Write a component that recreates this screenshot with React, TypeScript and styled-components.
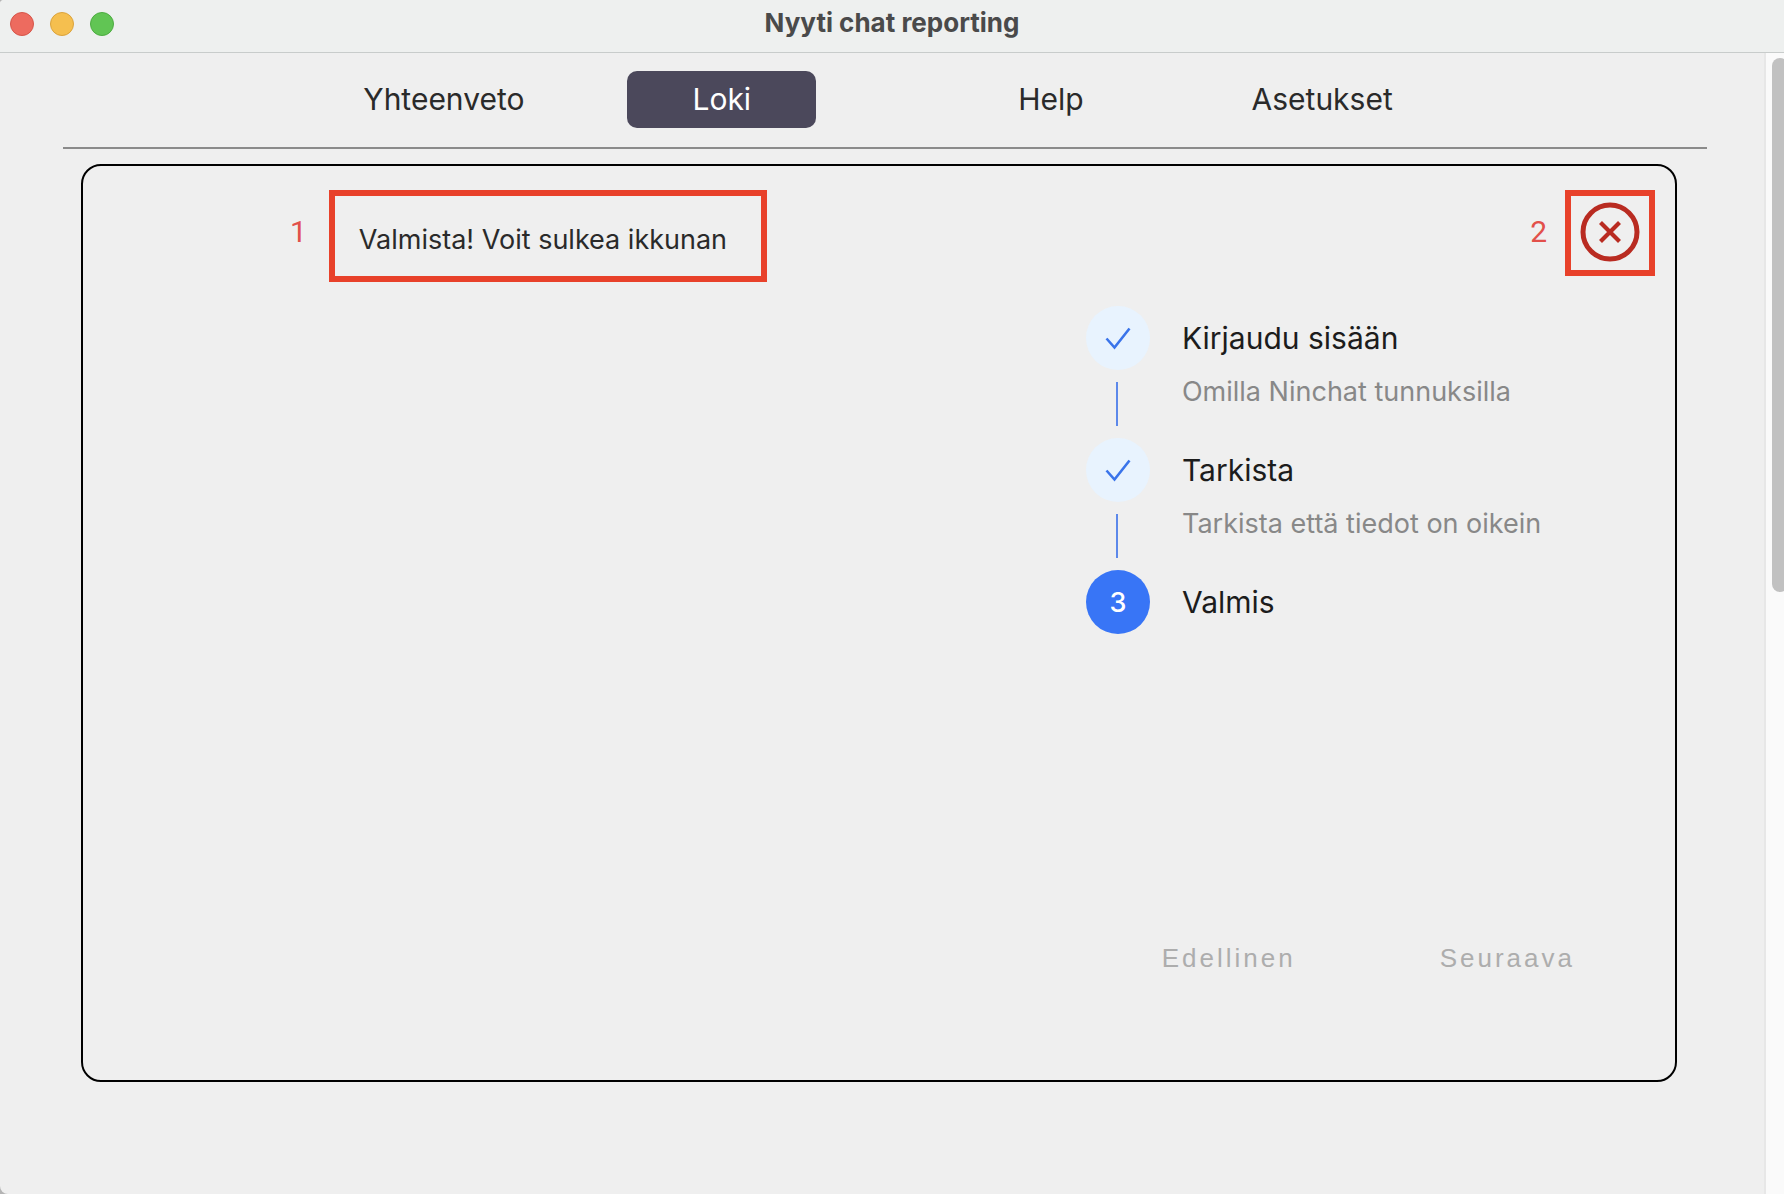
import React from "react";
import styled, { createGlobalStyle } from "styled-components";

const GlobalStyle = createGlobalStyle`
  *, *::before, *::after { box-sizing: border-box; }
  body {
    margin: 0;
    background: #b4b4b4;
    font-family: Inter, "Liberation Sans", sans-serif;
  }
  button { border: 0; padding: 0; background: none; font: inherit; cursor: pointer; }
`;

const Window = styled.div`
  display: flex;
  flex-direction: column;
  min-height: 100vh;
  overflow: hidden;
  background: #efefef;
  border-radius: 4px 0 0 8px;
`;

const TitleBar = styled.header`
  display: grid;
  grid-template-columns: 1fr auto 1fr;
  align-items: center;
  height: 53px;
  padding: 0 10px 5px;
  background: #eef0ef;
  border-bottom: 1px solid #c8cccb;
`;

const Lights = styled.div`
  display: flex;
  gap: 16px;
`;

const Light = styled.button<{ $fill: string; $edge: string }>`
  width: 24px;
  height: 24px;
  border: 1px solid ${(p) => p.$edge};
  border-radius: 50%;
  background: ${(p) => p.$fill};
`;

const Title = styled.h1`
  margin: 0;
  padding-bottom: 2px;
  font-size: 26px;
  line-height: 32px;
  font-weight: 700;
  color: #4a4a4a;
`;

const Viewport = styled.div`
  flex: 1;
  display: flex;
`;

const Content = styled.main`
  flex: 1;
  min-width: 0;
  padding: 0 57px 48px 63px;
`;

const ScrollTrack = styled.div`
  width: 20px;
  padding: 5px 0 0 6px;
  background: #fafafa;
  border-left: 2px solid #e7e7e7;
`;

const ScrollThumb = styled.div`
  width: 16px;
  height: 534px;
  border-radius: 8px;
  background: #c1c1c1;
`;

const Nav = styled.nav`
  display: flex;
  justify-content: center;
  gap: 137px;
  padding: 18px 14px 19px 0;
  border-bottom: 2px solid #8b8b8b;
`;

const NavGroup = styled.div`
  display: flex;
  gap: 38px;
`;

const NavItem = styled.button<{ $active?: boolean }>`
  padding: 0 65px;
  border-radius: 10px;
  font-size: 30px;
  line-height: 57px;
  color: ${(p) => (p.$active ? "#ffffff" : "#2a2a2a")};
  background: ${(p) => (p.$active ? "#4b485b" : "transparent")};
`;

const Card = styled.section`
  margin: 15px 30px 0 18px;
  padding: 24px 0 106px;
  border: 2px solid #000;
  border-radius: 20px;
`;

const CardHeader = styled.div`
  display: flex;
  justify-content: space-between;
  align-items: flex-start;
  padding: 0 20px 0 13%;
`;

const Callout = styled.div<{ $gap: number }>`
  display: flex;
  gap: ${(p) => p.$gap}px;
`;

const CalloutNumber = styled.span`
  font-size: 30px;
  line-height: 84px;
  color: #e2504a;
  font-family: Roboto, "Liberation Sans", sans-serif;
`;

const Frame = styled.div<{ $pad: string }>`
  padding: ${(p) => p.$pad};
  border: 6px solid #e8412a;
`;

const Status = styled.p`
  margin: 0;
  font-size: 27px;
  line-height: 32px;
  color: #2a2a2a;
`;

const CloseButton = styled.button`
  display: block;
  width: 60px;
  height: 60px;
  svg { display: block; }
`;

const Steps = styled.ol`
  list-style: none;
  margin: 24px 0 0 63%;
  padding: 0;
`;

const Step = styled.li`
  display: grid;
  grid-template-columns: 64px 1fr;
  column-gap: 32px;
`;

const Marker = styled.span<{ $current?: boolean }>`
  display: flex;
  align-items: center;
  justify-content: center;
  height: 64px;
  border-radius: 50%;
  font-size: 27px;
  font-weight: 500;
  color: ${(p) => (p.$current ? "#ffffff" : "#3a74ea")};
  background: ${(p) => (p.$current ? "#3875f6" : "#e8f3fe")};
`;

const StepTitle = styled.span`
  font-size: 30px;
  line-height: 64px;
  color: #1c1c1c;
  white-space: nowrap;
`;

const Connector = styled.span`
  justify-self: center;
  width: 2px;
  height: 44px;
  margin: 12px 2px 12px 0;
  background: #5c88ea;
`;

const StepNote = styled.span`
  font-size: 27px;
  line-height: 44px;
  color: #888888;
  white-space: nowrap;
`;

const Actions = styled.div`
  display: flex;
  justify-content: flex-end;
  gap: 144px;
  margin-top: 308px;
  padding-right: 100px;
`;

const ActionButton = styled.button`
  font-family: "Liberation Sans", sans-serif;
  font-size: 26px;
  line-height: 32px;
  letter-spacing: 3px;
  color: #adadad;
  cursor: default;
`;

const CheckIcon = () => (
  <svg width="26" height="24" viewBox="0 0 26 24" fill="none" aria-hidden="true">
    <path d="M1.5 12.5 9.5 21.5 24.5 2.5" stroke="currentColor" strokeWidth="2.6" />
  </svg>
);

const CloseIcon = () => (
  <svg width="60" height="60" viewBox="0 0 60 60" fill="none" stroke="#b92b21" aria-hidden="true">
    <circle cx="30" cy="30" r="27" strokeWidth="5" />
    <path d="M20.5 20.5 39.5 39.5M39.5 20.5 20.5 39.5" strokeWidth="4.2" />
  </svg>
);

const steps = [
  { title: "Kirjaudu sisään", note: "Omilla Ninchat tunnuksilla" },
  { title: "Tarkista", note: "Tarkista että tiedot on oikein" },
  { title: "Valmis", note: "" },
];

const currentStep = 2;

export default function App() {
  return (
    <>
      <GlobalStyle />
      <Window>
        <TitleBar>
          <Lights>
            <Light $fill="#ed6b5f" $edge="#d65549" aria-label="Close window" />
            <Light $fill="#f5bf4f" $edge="#dba33c" aria-label="Minimize window" />
            <Light $fill="#61c554" $edge="#4dac41" aria-label="Zoom window" />
          </Lights>
          <Title>Nyyti chat reporting</Title>
        </TitleBar>
        <Viewport>
          <Content>
            <Nav>
              <NavGroup>
                <NavItem>Yhteenveto</NavItem>
                <NavItem $active aria-current="page">Loki</NavItem>
              </NavGroup>
              <NavGroup>
                <NavItem>Help</NavItem>
                <NavItem>Asetukset</NavItem>
              </NavGroup>
            </Nav>
            <Card>
              <CardHeader>
                <Callout $gap={22}>
                  <CalloutNumber>1</CalloutNumber>
                  <Frame $pad="28px 34px 20px 24px">
                    <Status>Valmista! Voit sulkea ikkunan</Status>
                  </Frame>
                </Callout>
                <Callout $gap={18}>
                  <CalloutNumber>2</CalloutNumber>
                  <Frame $pad="6px 9px 8px">
                    <CloseButton aria-label="Sulje">
                      <CloseIcon />
                    </CloseButton>
                  </Frame>
                </Callout>
              </CardHeader>
              <Steps>
                {steps.map((step, i) => (
                  <Step key={step.title} aria-current={i === currentStep ? "step" : undefined}>
                    <Marker $current={i === currentStep}>
                      {i < currentStep ? <CheckIcon /> : i + 1}
                    </Marker>
                    <StepTitle>{step.title}</StepTitle>
                    {i < steps.length - 1 && (
                      <>
                        <Connector />
                        <StepNote>{step.note}</StepNote>
                      </>
                    )}
                  </Step>
                ))}
              </Steps>
              <Actions>
                <ActionButton disabled>Edellinen</ActionButton>
                <ActionButton disabled>Seuraava</ActionButton>
              </Actions>
            </Card>
          </Content>
          <ScrollTrack>
            <ScrollThumb />
          </ScrollTrack>
        </Viewport>
      </Window>
    </>
  );
}
